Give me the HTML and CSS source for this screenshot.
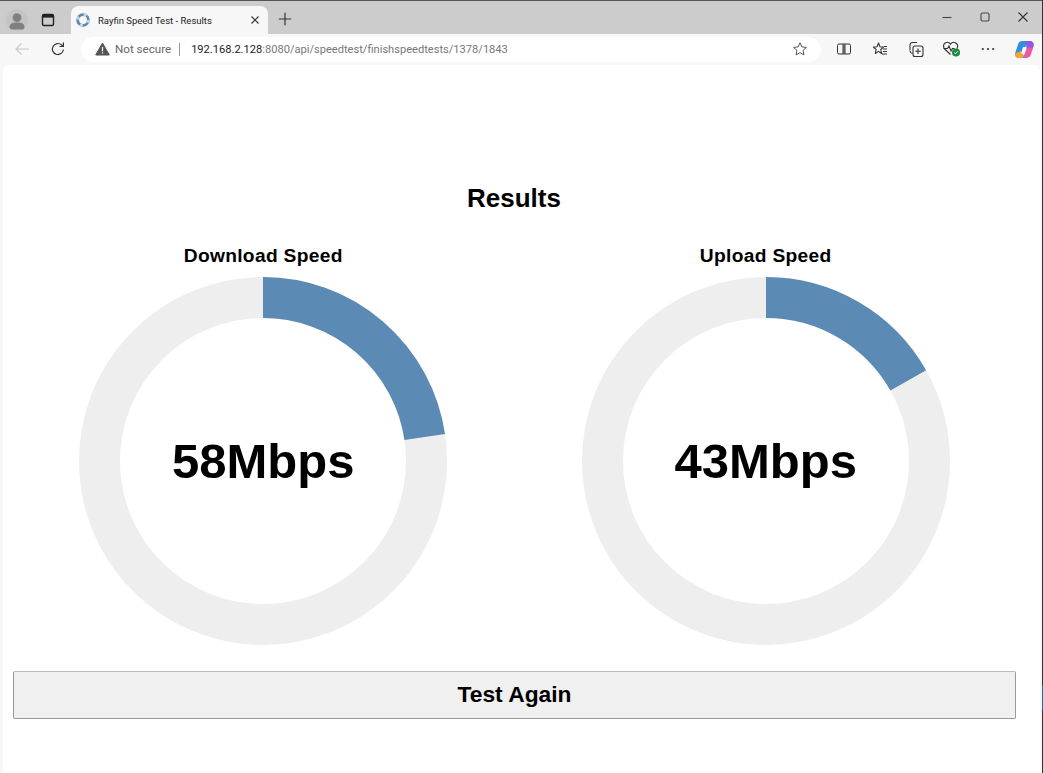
FILE: index.html
```html
<!DOCTYPE html>
<html lang="en">
<head>
<meta charset="utf-8">
<title>Rayfin Speed Test - Results</title>
<link rel="stylesheet" href="styles.css">
</head>
<body>
<div class="window">
  <div class="browser">
    <header class="titlebar">
      <div class="profile">
        <svg width="16" height="17" viewBox="0 0 16 17"><circle cx="8" cy="4.600" r="4.400" fill="#808080"/><path d="M.5 14c0-3 2.600-4.400 7.500-4.400s7.500 1.400 7.500 4.400c0 1.500-.8 2.500-2.200 2.500H2.700C1.300 16.500.5 15.500.5 14z" fill="#808080"/></svg>
      </div>
      <div class="tabstrip-btn">
        <svg width="16" height="16" viewBox="0 0 16 16" fill="none" stroke="#222" stroke-width="1.400"><rect x="2.500" y="2.500" width="11" height="11" rx="1.500"/><path d="M2.500 4.300h11" stroke-width="2.600"/></svg>
      </div>
      <div class="tab">
        <svg class="favicon" width="16" height="16" viewBox="0 0 16 16" fill="none"><circle cx="8" cy="8" r="5.400" stroke="#5b8ab4" stroke-width="2.800"/><circle cx="8" cy="8" r="5.400" stroke="#c4d4e2" stroke-width="2.800" stroke-dasharray="3 5.500"/></svg>
        <span class="tab-title">Rayfin Speed Test - Results</span>
        <svg class="tab-close" width="10" height="10" viewBox="0 0 10 10" stroke="#333" stroke-width="1.100"><path d="M1.500 1.500l7 7M8.500 1.500l-7 7"/></svg>
      </div>
      <div class="newtab">
        <svg width="14" height="14" viewBox="0 0 14 14" stroke="#333" stroke-width="1.200"><path d="M7 .8v12.400M.8 7h12.400"/></svg>
      </div>
      <div class="caption">
        <svg width="12" height="12" viewBox="0 0 12 12" stroke="#444" stroke-width="1.100"><path d="M1.500 6.500h9"/></svg>
        <svg width="12" height="12" viewBox="0 0 12 12" fill="none" stroke="#444" stroke-width="1.100"><rect x="2" y="2" width="8" height="8" rx="1.500"/></svg>
        <svg width="12" height="12" viewBox="0 0 12 12" stroke="#333" stroke-width="1.100"><path d="M1.500 1.500l9 9M10.500 1.500l-9 9"/></svg>
      </div>
    </header>
    <nav class="toolbar">
      <div class="nav-btns">
        <svg width="16" height="16" viewBox="0 0 16 16" fill="none" stroke="#c8c8c8" stroke-width="1.200"><path d="M15 8H2M7.500 2.500L2 8l5.500 5.500"/></svg>
        <svg width="16" height="16" viewBox="0 0 16 16" fill="none" stroke="#333" stroke-width="1.200"><path d="M13.400 8.500a5.500 5.500 0 1 1-1.700-4.500l1.500 1.400"/><path d="M13.400 1.500v4h-4"/></svg>
      </div>
      <div class="address">
        <svg class="warn" width="15" height="14" viewBox="0 0 15 14"><path d="M7.500 1L14.300 13H.7z" fill="#555" stroke="#555" stroke-linejoin="round"/><path d="M7.500 5v4.200M7.500 10.300v1.200" stroke="#fff" stroke-width="1.200"/></svg>
        <span class="not-secure">Not secure</span>
        <span class="sep"></span>
        <span class="url"><span class="host">192.168.2.128</span>:8080/api/speedtest/finishspeedtests/1378/1843</span>
        <svg class="fav-star" width="16" height="16" viewBox="0 0 16 16" fill="none" stroke="#555" stroke-width="1"><path d="M8 1.800l1.900 4.100 4.500.5-3.300 3 .9 4.500L8 11.700l-4 2.200.9-4.500-3.300-3 4.500-.5z" stroke-linejoin="round"/></svg>
      </div>
      <div class="tools">
        <span class="tool"><svg width="16" height="16" viewBox="0 0 16 16" fill="none" stroke="#333" stroke-width="1"><path d="M7 3H3a1.500 1.500 0 0 0-1.500 1.500v7A1.500 1.500 0 0 0 3 13h4zM9 3h4a1.500 1.500 0 0 1 1.500 1.500v7A1.500 1.500 0 0 1 13 13H9zM8 2v12"/></svg></span>
        <span class="tool"><svg width="16" height="16" viewBox="0 0 16 16" fill="none" stroke="#333" stroke-width="1.100"><path d="M6.500 2l1.500 3.800 3.500.3-2.700 2.400.8 4L6.500 10.400 3.300 12.500l.8-4L1.400 6.100l3.600-.3z" stroke-linejoin="round"/><path d="M11 8h4M11 10.500h4M10 13h5M12 5.500h3"/></svg></span>
        <span class="tool"><svg width="18" height="18" viewBox="0 0 18 18" fill="none" stroke="#333" stroke-width="1.100"><path d="M3 10.500V5a2.500 2.500 0 0 1 2.500-2.500H10M3 11c.3 1.400 1 2.200 2.500 2.500"/><rect x="6" y="6" width="10" height="10.500" rx="2"/><path d="M11 8.500v5.500M8.300 11.200h5.400"/></svg></span>
        <span class="tool"><svg width="20" height="18" viewBox="0 0 20 18"><path d="M8.500 14.500L2.700 9C1 7.200 1.200 4.500 2.900 3.200c1.800-1.300 4.200-.9 5.600 1 1.400-1.900 3.800-2.300 5.600-1 1.700 1.300 1.900 3.600.7 5.400" fill="none" stroke="#333" stroke-width="1.100"/><path d="M1.500 8.500h4l1.500-2.500 2 5 1.500-2.500h2" fill="none" stroke="#333" stroke-width="1.100"/><circle cx="14" cy="12.500" r="4" fill="#1b8a3a"/><path d="M12.200 12.500l1.300 1.300 2.300-2.500" fill="none" stroke="#fff" stroke-width="1"/></svg></span>
        <span class="tool"><svg width="16" height="16" viewBox="0 0 16 16" fill="#333"><circle cx="2.800" cy="8" r="1.100"/><circle cx="8" cy="8" r="1.100"/><circle cx="13.200" cy="8" r="1.100"/></svg></span>
        <span class="tool"><svg width="19" height="19" viewBox="1 1 17 16" fill="none">
          <path d="M7.500 1.500h5l-4 9.500-1 5.500H4C1.500 16.500.6 14 1.300 12L3.800 4C4.400 2.500 5.800 1.500 7.500 1.500z" fill="#2f8fe0"/>
          <path d="M8.500 11l-1 5.500H4c-1.800 0-3-1.400-2.800-3.500C3 11 6 10.500 8.500 11z" fill="#f5a623"/>
          <path d="M7 16.500h4.500c1.700 0 3-1 3.600-2.500l2.500-8c.5-2-.6-4.500-3-4.500h-2.100L11 7.500 8 16z" fill="#e85aa8"/>
          <path d="M11 1.500h3.600c2.200 0 3.400 2.200 3 4.500-1.600 1.400-4 1.500-6.100 1.200L11 5z" fill="#8e5be0"/>
          <path d="M8.200 6.500l3.300 1-2 6-3-1z" fill="#fff"/>
        </svg></span>
      </div>
    </nav>
    <main class="page">
      <h1 class="heading">Results</h1>
      <div class="gauges">
        <section class="gauge">
          <h2 class="gauge-title">Download Speed</h2>
          <div class="dial">
            <svg class="ring" width="368" height="368" viewBox="0 0 368 368" fill="none">
              <circle class="track" cx="184" cy="184" r="163.500"/>
              <circle class="value" cx="184" cy="184" r="163.500" pathLength="256" stroke-dasharray="58 198" transform="rotate(-90 184 184)"/>
            </svg>
            <span class="reading">58Mbps</span>
          </div>
        </section>
        <section class="gauge">
          <h2 class="gauge-title">Upload Speed</h2>
          <div class="dial">
            <svg class="ring" width="368" height="368" viewBox="0 0 368 368" fill="none">
              <circle class="track" cx="184" cy="184" r="163.500"/>
              <circle class="value" cx="184" cy="184" r="163.500" pathLength="256" stroke-dasharray="43 213" transform="rotate(-90 184 184)"/>
            </svg>
            <span class="reading">43Mbps</span>
          </div>
        </section>
      </div>
      <button class="again" type="button">Test Again</button>
    </main>
  </div>
  <div class="window-edge"></div>
</div>
</body>
</html>
```

FILE: styles.css
```css
* { box-sizing: border-box; }
html, body { margin: 0; height: 100%; overflow: hidden; }
body { background: #f7f7f7; }

.window { display: flex; width: 1043px; height: 773px; font-family: Roboto, "Liberation Sans", sans-serif; }
.browser { flex: 1; min-width: 0; display: flex; flex-direction: column; background: #f7f7f7; }
.window-edge { width: 1px; background: linear-gradient(to bottom, #333 0, #333 685px, #1a6fb5 685px, #1a6fb5 710px, #333 710px); }

.titlebar { height: 34px; flex: none; display: flex; align-items: flex-end; background: #cccccc; border-top: 1px solid #555; }
.profile { width: 22px; height: 22px; margin: 0 0 3px 6px; border-radius: 50%; background: #c4c4c4; display: flex; align-items: flex-end; justify-content: center; padding-bottom: 1px; }
.tabstrip-btn { width: 16px; height: 16px; margin: 0 0 6px 12px; display: flex; }
.tab { width: 197px; height: 28px; margin-left: 15px; padding: 0 8px 0 4px; background: #f7f7f7; border-radius: 8px 8px 0 0; display: flex; align-items: center; }
.favicon { flex: none; }
.tab-title { margin-left: 7px; font-size: 9.500px; color: #222; white-space: nowrap; flex: 1; }
.tab-close { flex: none; }
.newtab { width: 14px; height: 14px; margin: 0 0 8px 10px; display: flex; }
.caption { margin: 0 13px 11px auto; display: flex; gap: 26px; }

.toolbar { height: 31px; flex: none; display: flex; align-items: center; padding-bottom: 1px; background: #f7f7f7; }
.nav-btns { display: flex; gap: 20px; margin-left: 14px; }
.address { width: 743px; height: 25px; margin-left: 15px; padding: 0 13px 0 14px; background: #fff; border-radius: 13px; display: flex; align-items: center; }
.warn { flex: none; }
.not-secure { margin-left: 5px; font-size: 11.600px; color: #666; white-space: nowrap; }
.sep { width: 1px; height: 13px; margin: 0 11px 0 8px; background: #999; flex: none; }
.url { font-size: 11.100px; color: #777; white-space: nowrap; flex: 1; }
.host { color: #222; }
.fav-star { flex: none; }
.tools { display: flex; align-items: center; margin-left: 5px; }
.tool { display: flex; width: 36px; justify-content: center; flex: none; }

.page { flex: 1; min-height: 0; margin: 0 2px 0 3px; padding: 0 24px 0 10px; background: #fff; border-radius: 6px 6px 0 0; font-family: "Liberation Sans", Arial, sans-serif; color: #000; }
.heading { margin: 0; padding: 118px 1px 0 0; font-size: 26px; line-height: 30px; font-weight: 700; text-align: center; }
.gauges { display: grid; grid-template-columns: 1fr 1fr; column-gap: 2px; margin-top: 31px; }
.gauge { display: flex; flex-direction: column; align-items: center; }
.gauge-title { margin: 0; font-size: 19.200px; letter-spacing: .32px; line-height: 24px; font-weight: 700; }
.dial { display: grid; width: 368px; height: 368px; margin-top: 9px; place-items: center; }
.ring { grid-area: 1 / 1; display: block; }
.track { stroke: #efeeef; stroke-width: 41; }
.value { stroke: #5b8ab4; stroke-width: 41; }
.reading { grid-area: 1 / 1; font-size: 49px; line-height: 56px; font-weight: 700; }
.again { display: block; width: 100%; height: 48px; margin-top: 26px; padding-bottom: 3px; background: #f0f0f1; border: 1px solid #999; border-top-color: #bbb; border-radius: 2px; font-family: inherit; font-size: 22.800px; font-weight: 700; color: #000; }
```
